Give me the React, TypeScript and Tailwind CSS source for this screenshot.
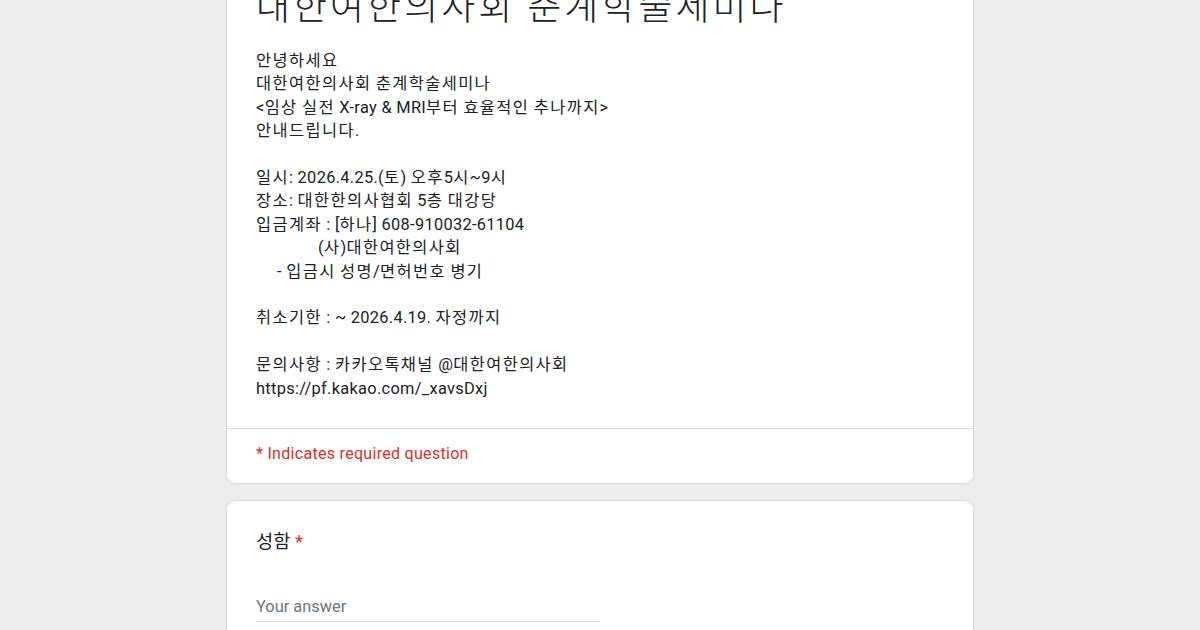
import React from 'react';

const font = { fontFamily: 'Roboto, "Noto Sans CJK KR", sans-serif' };

// Hangul runs get a little more tracking than Latin, as in the reference
function Txt({ children }: { children: string }) {
  const parts = children.split(/([가-힣]+)/);
  return (
    <>
      {parts.map((p, i) =>
        /[가-힣]/.test(p) ? (
          <span key={i} className="tracking-[1.4px]">{p}</span>
        ) : (
          <span key={i} className="tracking-[0.3px]">{p}</span>
        )
      )}
    </>
  );
}

export default function App() {
  return (
    <div className="w-[1200px] h-[630px] overflow-hidden bg-[#ededed] text-[#202124]" style={font}>
      <div className="w-[748px] mx-auto -mt-[39px] flex flex-col gap-[16px]">
        {/* Header card */}
        <div className="bg-white border border-[#dadce0] rounded-[9px]">
          <div className="px-[29px] pt-[24px] pb-[28px]">
            <h1 className="text-[37px] leading-[44px] font-light tracking-[3px]">
              대한여한의사회 춘계학술세미나
            </h1>
            <div className="mt-[19px] text-[16.4px] leading-[23.4px]">
              <p><Txt>안녕하세요</Txt></p>
              <p><Txt>대한여한의사회 춘계학술세미나</Txt></p>
              <p><Txt>{'<임상 실전 X-ray & MRI부터 효율적인 추나까지>'}</Txt></p>
              <p><Txt>안내드립니다.</Txt></p>
              <p>&nbsp;</p>
              <p><Txt>일시: 2026.4.25.(토) 오후5시~9시</Txt></p>
              <p><Txt>장소: 대한한의사협회 5층 대강당</Txt></p>
              <p><Txt>입금계좌 : [하나] 608-910032-61104</Txt></p>
              <p className="pl-[62px]"><Txt>(사)대한여한의사회</Txt></p>
              <p className="pl-[21px]"><Txt>- 입금시 성명/면허번호 병기</Txt></p>
              <p>&nbsp;</p>
              <p><Txt>취소기한 : ~ 2026.4.19. 자정까지</Txt></p>
              <p>&nbsp;</p>
              <p><Txt>문의사항 : 카카오톡채널 @대한여한의사회</Txt></p>
              <p><Txt>https://pf.kakao.com/_xavsDxj</Txt></p>
            </div>
          </div>
          <div className="border-t border-[#dadce0] px-[29px] pt-[13px] pb-[17px] text-[16px] leading-[23.4px] tracking-[0.3px] text-[#d93025]">
            * Indicates required question
          </div>
        </div>

        {/* Question card */}
        <div className="bg-white border border-[#dadce0] rounded-[9px] px-[29px] pt-[27px] pb-[40px]">
          <div className="text-[18.7px] leading-[28px]">
            성함 <span className="text-[#d93025]">*</span>
          </div>
          <div className="mt-[39px] w-1/2 border-b border-[#dadce0] pb-[3px] text-[16.4px] leading-[23.4px] text-[#70757a]">
            Your answer
          </div>
        </div>
      </div>
    </div>
  );
}
